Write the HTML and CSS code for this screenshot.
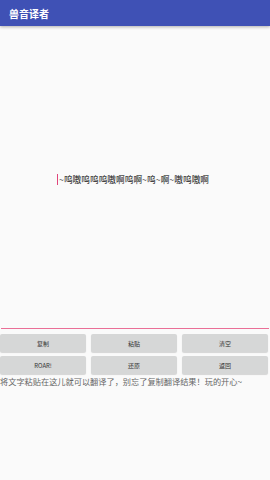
FILE: index.html
```html
<!DOCTYPE html>
<html lang="zh">
<head>
<meta charset="utf-8">
<link rel="stylesheet" href="styles.css">
</head>
<body>
<header class="appbar"><span class="title">兽音译者</span></header>
<main class="editor">
  <div class="content"><span class="caret"></span>~呜嗷呜呜呜嗷啊呜啊~呜~啊~嗷呜嗷啊</div>
  <div class="underline"></div>
</main>
<section class="buttons">
  <button class="btn">复制</button>
  <button class="btn">粘贴</button>
  <button class="btn">清空</button>
  <button class="btn">ROAR!</button>
  <button class="btn">还原</button>
  <button class="btn">返回</button>
</section>
<p class="hint">将文字粘贴在这儿就可以翻译了，别忘了复制翻译结果！玩的开心~</p>
</body>
</html>
```
FILE: styles.css
```css
html, body {
  margin: 0;
  padding: 0;
  width: 270px;
  height: 480px;
  background: #fafafa;
  font-family: "Noto Sans CJK SC", "Noto Sans", sans-serif;
  overflow: hidden;
}
.appbar {
  height: 26px;
  background: #3f51b5;
  display: flex;
  align-items: center;
  padding-left: 9px;
  box-shadow: 0 1px 3px rgba(0,0,0,0.3);
  position: relative;
  z-index: 1;
}
.title {
  color: #fff;
  font-size: 10px;
  font-weight: bold;
}
.editor {
  height: 304px;
  display: flex;
  flex-direction: column;
  padding: 0 1px;
}
.content {
  flex: 1;
  display: flex;
  align-items: center;
  justify-content: center;
  font-size: 8.7px;
  color: #444;
  font-weight: 500;
  padding-top: 6px;
  padding-right: 4px;
}
.caret {
  width: 1px;
  height: 11px;
  background: #e0457b;
  margin-right: 1px;
}
.underline {
  height: 1.5px;
  background: #ea6f97;
  margin-bottom: 1px;
}
.buttons {
  display: grid;
  grid-template-columns: repeat(3, 1fr);
  gap: 4px 5px;
  padding: 4px 2px 0 0;
}
.btn {
  height: 18px;
  border: none;
  border-radius: 2px;
  background: #d6d7d7;
  color: #333;
  font-family: "Noto Sans CJK SC", "Noto Sans", sans-serif;
  font-size: 6px;
  padding: 0;
  box-shadow: 0 1px 1px rgba(0,0,0,0.15);
}
.hint {
  margin: 1px 0 0 0;
  font-size: 8.2px;
  color: #666;
  white-space: nowrap;
}
```
